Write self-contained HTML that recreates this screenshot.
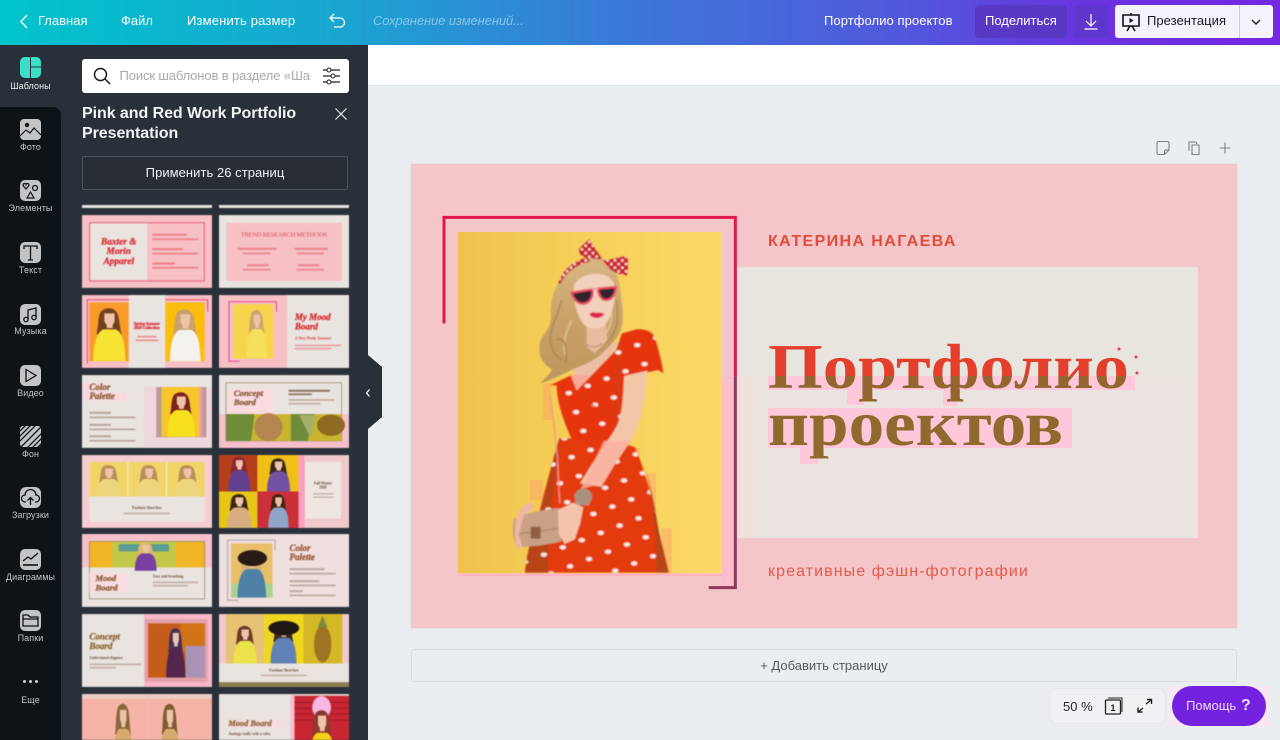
<!DOCTYPE html>
<html lang="ru"><head><meta charset="utf-8"><title>Портфолио проектов</title>
<style>
*{box-sizing:border-box}
html,body{margin:0;padding:0;width:1280px;height:740px;overflow:hidden;background:#ebeef1;font-family:"Liberation Sans","Noto Sans CJK SC",sans-serif}
.a{position:absolute;white-space:nowrap}
#top{left:0;top:0;width:1280px;height:45px;background:linear-gradient(90deg,#00c4cc 0%,#18a7d0 25%,#3d76d8 50%,#5355dc 72%,#6a33e0 85%,#7328e2 100%)}
.t{color:#fff;font-size:13px;line-height:18px;top:12px;font-weight:400}
#side{left:0;top:45px;width:368px;height:695px;background:#293039}
#nav{left:0;top:107px;width:61px;height:633px;background:#0e1318;border-top-right-radius:8px}
.ic{position:absolute;left:20px;width:21px;height:21px}
.lb{position:absolute;left:0;width:61px;text-align:center;font-size:9px;line-height:12px;color:#bfc3c6;letter-spacing:.1px}
#grid{left:82px;top:205px;width:267px;height:535px;overflow:hidden}
#grid svg{position:absolute;width:130px;height:73px;display:block}
.h{font-family:"Liberation Serif","Noto Serif CJK SC",serif;font-weight:700;font-style:italic;stroke-width:1}
</style></head><body>
<svg width="0" height="0" style="position:absolute">
<defs>
<symbol id="p" viewBox="0 0 100 160" preserveAspectRatio="none">
<path fill="currentColor" d="M30 16C44 2 62 6 70 20c8 18 6 44 12 62H18c6-22 2-50 12-66z"/>
<path fill="#eec3a8" d="M38 22h26v24l-5 10v8H44v-9l-6-9z"/>
<path d="M10 160c0-40 6-84 26-92h30c22 8 24 52 26 92z"/>
</symbol>
</defs>
</svg>

<div id="top" class="a"></div>
<svg class="a" style="left:18px;top:13px" width="12" height="17" viewBox="0 0 12 17"><path d="M9 2L3 8.500 9 15" fill="none" stroke="#fff" stroke-width="1.400"/></svg>
<div class="a t" style="left:38px">Главная</div>
<div class="a t" style="left:121px">Файл</div>
<div class="a t" style="left:187px;letter-spacing:.16px">Изменить размер</div>
<svg class="a" style="left:327px;top:12px" width="20" height="18" viewBox="0 0 20 18"><path d="M7 2L3 6l4 4M3 6h10a4 4 0 0 1 0 9H7" fill="none" stroke="#fff" stroke-width="1.300"/></svg>
<div class="a t" style="left:373px;font-style:italic;color:#88c4ea;letter-spacing:-.1px">Сохранение изменений...</div>
<div class="a t" style="left:824px;letter-spacing:.07px">Портфолио проектов</div>
<div class="a" style="left:975px;top:5px;width:92px;height:33px;background:#5739c6;border-radius:4px"></div>
<div class="a t" style="left:985px">Поделиться</div>
<div class="a" style="left:1074px;top:5px;width:34px;height:33px;background:#5f37cf;border-radius:4px"></div>
<svg class="a" style="left:1082px;top:13px" width="18" height="18" viewBox="0 0 18 18"><path d="M9 1v12M4 8l5 5 5-5M2.500 16h13" fill="none" stroke="#fff" stroke-width="1.200"/></svg>
<div class="a" style="left:1115px;top:5px;width:158px;height:33px;background:#f6f2fb;border-radius:3px"></div>
<div class="a" style="left:1239px;top:5px;width:1px;height:33px;background:#cfcbd8"></div>
<svg class="a" style="left:1120px;top:12px" width="22" height="20" viewBox="0 0 22 20"><path d="M3 3h16v11H3zM11 1v2M7 19l3-5M15 19l-3-5" fill="none" stroke="#111" stroke-width="1.600"/><path d="M9.500 6l4 2.500-4 2.500z" fill="#111"/></svg>
<div class="a t" style="left:1147px;color:#1b1b20;letter-spacing:.05px">Презентация</div>
<svg class="a" style="left:1250px;top:17px" width="12" height="10" viewBox="0 0 12 10"><path d="M2 3l4 4 4-4" fill="none" stroke="#222" stroke-width="1.500"/></svg>

<div id="side" class="a"></div>
<div id="nav" class="a"></div>
<svg class="ic" style="top:57px" viewBox="0 0 21 21"><rect width="21" height="21" rx="5" fill="#3bdfc9"/><path d="M10.500 0v21M10.500 10h10.500" stroke="#293039" stroke-width="1"/></svg>
<div class="lb" style="top:80px;color:#eef0f1">Шаблоны</div>
<svg class="ic" style="top:119px" viewBox="0 0 21 21"><rect width="21" height="21" rx="4" fill="#c2c4c6"/><circle cx="7" cy="6" r="2.200" fill="#0e1318"/><path d="M0 17l6-6 4 3 4-5 7 7" fill="none" stroke="#0e1318" stroke-width="1.200"/></svg>
<div class="lb" style="top:141px">Фото</div>
<svg class="ic" style="top:180px" viewBox="0 0 21 21"><rect width="21" height="21" rx="5" fill="#c2c4c6"/><path d="M6 9L3 5.500C3 3 5.500 3 6 4.500 6.500 3 9 3 9 5.500zM10.500 12l3.500 6H7z" fill="none" stroke="#0e1318" stroke-width="1.200"/><circle cx="15" cy="8" r="2.500" fill="none" stroke="#0e1318" stroke-width="1.200"/></svg>
<div class="lb" style="top:202px">Элементы</div>
<svg class="ic" style="top:242px" viewBox="0 0 21 21"><rect width="21" height="21" rx="5" fill="#c2c4c6"/><path d="M4 7V4h13v3M10.500 4v14M8 18h5" fill="none" stroke="#0e1318" stroke-width="1.300"/></svg>
<div class="lb" style="top:264px">Текст</div>
<svg class="ic" style="top:304px" viewBox="0 0 21 21"><rect width="21" height="21" rx="5" fill="#c2c4c6"/><path d="M8 15V6l8-2v9" fill="none" stroke="#0e1318" stroke-width="1.300"/><circle cx="6" cy="15.500" r="2.200" fill="none" stroke="#0e1318" stroke-width="1.300"/><circle cx="14" cy="13.500" r="2.200" fill="none" stroke="#0e1318" stroke-width="1.300"/></svg>
<div class="lb" style="top:325px">Музыка</div>
<svg class="ic" style="top:365px" viewBox="0 0 21 21"><rect width="21" height="21" rx="5" fill="#c2c4c6"/><path d="M6 4.500l10 6-10 6z" fill="none" stroke="#0e1318" stroke-width="1.300"/></svg>
<div class="lb" style="top:387px">Видео</div>
<svg class="ic" style="top:426px" viewBox="0 0 21 21"><rect width="21" height="21" rx="3" fill="#c2c4c6"/><path d="M-2 7L7-2M-2 12L12-2M-2 17L17-2M1 21L21 1M6 23L23 6M11 23L23 11M16 23L23 16" stroke="#0e1318" stroke-width="1.300"/></svg>
<div class="lb" style="top:448px">Фон</div>
<svg class="ic" style="top:487px" viewBox="0 0 21 21"><rect width="21" height="21" rx="6" fill="#c2c4c6"/><path d="M6 15H5a3.500 3.500 0 0 1 0-7 5.500 5.500 0 0 1 11 0 3.500 3.500 0 0 1 0 7h-1M10.500 18v-7M7.500 13.500l3-3 3 3" fill="none" stroke="#0e1318" stroke-width="1.300"/></svg>
<div class="lb" style="top:509px">Загрузки</div>
<svg class="ic" style="top:549px" viewBox="0 0 21 21"><rect width="21" height="21" rx="5" fill="#c2c4c6"/><path d="M3 12l5-4 3 2 7-6" fill="none" stroke="#0e1318" stroke-width="1.300"/><path d="M3 16h15" stroke="#0e1318" stroke-width="1.600"/></svg>
<div class="lb" style="top:571px">Диаграммы</div>
<svg class="ic" style="top:610px" viewBox="0 0 21 21"><rect width="21" height="21" rx="5" fill="#c2c4c6"/><path d="M3 16V5h5l2 2h8v9zM3 9h15" fill="none" stroke="#0e1318" stroke-width="1.300"/></svg>
<div class="lb" style="top:632px">Папки</div>
<svg class="a" style="left:22px;top:679px" width="18" height="5"><circle cx="2.500" cy="2.500" r="1.500" fill="#c9cbcd"/><circle cx="8.500" cy="2.500" r="1.500" fill="#c9cbcd"/><circle cx="14.500" cy="2.500" r="1.500" fill="#c9cbcd"/></svg>
<div class="lb" style="top:694px">Еще</div>

<div class="a" style="left:82px;top:59px;width:267px;height:34px;background:#fff;border-radius:3px"></div>
<svg class="a" style="left:92px;top:66px" width="20" height="20" viewBox="0 0 20 20"><circle cx="8.500" cy="8.500" r="6" fill="none" stroke="#111" stroke-width="1.400"/><path d="M13 13l5 5" stroke="#111" stroke-width="1.400"/></svg>
<div class="a" style="left:119.500px;top:67px;width:191px;overflow:hidden;font-size:13px;line-height:18px;color:#a5a8ac;letter-spacing:-.12px">Поиск шаблонов в разделе «Шаблоны»</div>
<svg class="a" style="left:322px;top:67px" width="19" height="18" viewBox="0 0 19 18"><path d="M1 3h17M1 9h17M1 15h17" stroke="#222" stroke-width="1.200"/><circle cx="7" cy="3" r="2" fill="#fff" stroke="#222" stroke-width="1.100"/><circle cx="11" cy="9" r="2" fill="#fff" stroke="#222" stroke-width="1.100"/><circle cx="7" cy="15" r="2" fill="#fff" stroke="#222" stroke-width="1.100"/></svg>
<div class="a" style="left:82px;top:103.500px;color:#f2f3f4;font-size:16px;line-height:20px;font-weight:700;white-space:normal;width:230px;letter-spacing:-.06px">Pink and Red Work Portfolio Presentation</div>
<svg class="a" style="left:334px;top:107px" width="14" height="14" viewBox="0 0 14 14"><path d="M1.500 1.500l11 11M12.500 1.500l-11 11" stroke="#eee" stroke-width="1.200"/></svg>
<div class="a" style="left:82px;top:156px;width:266px;height:34px;border:1px solid #4b525b;border-radius:2px;background:#292e36;color:#f0f1f2;font-size:13px;line-height:32px;text-align:center;font-weight:400;letter-spacing:.05px">Применить 26 страниц</div>

<div id="grid" class="a" style="filter:blur(.45px)">
<div class="a" style="left:0;top:0;width:130px;height:3px;background:#e9e4df"></div>
<div class="a" style="left:137px;top:0;width:130px;height:3px;background:#e9e4df"></div>

<svg style="left:0;top:10px" viewBox="0 0 389 218"><rect width="389" height="218" fill="#f6c0c5"/><rect x="24" y="24" width="171" height="172" fill="#e9e4df"/><rect x="23" y="23" width="343" height="174" fill="none" stroke="#ea5f72" stroke-width="3"/><g class="h" font-size="28" fill="#d8303a" stroke="#d8303a" text-anchor="middle"><text x="110" y="88">Baxter &amp;</text><text x="110" y="117">Morin</text><text x="110" y="146">Apparel</text></g><g fill="#ec8086"><rect x="210" y="56" width="105" height="6"/><rect x="210" y="70" width="138" height="5"/><rect x="210" y="99" width="92" height="6"/><rect x="210" y="113" width="138" height="5"/><rect x="210" y="142" width="68" height="6"/><rect x="210" y="155" width="138" height="5"/></g></svg>

<svg style="left:137px;top:10px" viewBox="0 0 389 218"><rect width="389" height="218" fill="#e9e4df"/><rect x="22" y="23" width="345" height="174" fill="#f6c0c5"/><text x="194" y="64" text-anchor="middle" font-family="Liberation Serif,serif" font-size="20" fill="#d9545e" textLength="258">TREND RESEARCH METHODS</text><g fill="#e9858b"><rect x="56" y="98" width="116" height="6"/><rect x="72" y="112" width="82" height="5"/><rect x="226" y="98" width="100" height="6"/><rect x="232" y="112" width="82" height="5"/><rect x="84" y="147" width="64" height="6"/><rect x="72" y="161" width="82" height="5"/><rect x="236" y="147" width="64" height="6"/><rect x="232" y="161" width="82" height="5"/></g></svg>

<svg style="left:0;top:90px" viewBox="0 0 389 218"><rect width="389" height="218" fill="#f6c0c5"/><path d="M16 205V14h360v36" fill="none" stroke="#e8486e" stroke-width="3"/><rect x="22" y="22" width="118" height="176" fill="#fa9a28"/><rect x="249" y="22" width="118" height="176" fill="#fbbe0c"/><use href="#p" x="22" y="32" width="118" height="166" fill="#f7e334" color="#73401f"/><use href="#p" x="252" y="35" width="112" height="163" fill="#f4f2ee" color="#c9a16b"/><rect x="140" width="109" height="218" fill="#e9e4df"/><g class="h" font-size="12" fill="#dd3640" stroke="#dd3640" stroke-width=".4" text-anchor="middle"><text x="194" y="90">Spring Summer</text><text x="194" y="102">2020 Collection</text></g><g fill="#ec8c90"><rect x="165" y="122" width="58" height="5"/><rect x="160" y="133" width="68" height="5"/></g></svg>

<svg style="left:137px;top:90px" viewBox="0 0 389 218"><rect width="389" height="218" fill="#f6c0c5"/><rect x="204" width="185" height="218" fill="#e9e4df"/><path d="M172 50V20H30v178h32" fill="none" stroke="#dd4a90" stroke-width="3"/><rect x="42" y="27" width="121" height="163" fill="#f8d44e"/><use href="#p" x="75" y="38" width="75" height="150" fill="#f4e05a" color="#caa76c"/><g class="h" font-size="27" fill="#d52f36" stroke="#d52f36"><text x="227" y="74">My Mood</text><text x="227" y="103">Board</text></g><text x="227" y="133" class="h" font-size="12" fill="#d83840">A Very Pretty Summer</text><g fill="#e8a0a0"><rect x="227" y="148" width="138" height="5"/><rect x="227" y="158" width="110" height="5"/></g></svg>

<svg style="left:0;top:170px" viewBox="0 0 389 218"><rect width="389" height="218" fill="#e9e4df"/><rect x="0" y="52" width="135" height="24" fill="#f8d8df"/><rect x="0" y="25" width="70" height="25" fill="#f8d8df"/><rect x="185" y="35" width="204" height="183" fill="#efd8dc"/><rect x="222" y="36" width="150" height="150" fill="#bc9a98"/><rect x="238" y="36" width="118" height="148" fill="#f6c62b"/><rect x="352" y="36" width="8" height="148" fill="#f29ab0"/><use href="#p" x="245" y="45" width="102" height="140" fill="#f7e01c" color="#7b2418"/><g class="h" font-size="27" fill="#8d5e3a" stroke="#8d5e3a"><text x="22" y="44">Color</text><text x="22" y="72">Palette</text></g><g fill="#b9a59a"><rect x="22" y="110" width="65" height="6"/><rect x="22" y="124" width="138" height="5"/><rect x="22" y="146" width="65" height="6"/><rect x="22" y="160" width="138" height="5"/><rect x="22" y="180" width="65" height="6"/><rect x="22" y="194" width="138" height="5"/></g></svg>

<svg style="left:137px;top:170px" viewBox="0 0 389 218"><rect width="389" height="218" fill="#e9e4df"/><rect y="117" width="389" height="101" fill="#f6c0cb"/><rect x="25" y="40" width="135" height="78" fill="#f9dbe0"/><rect x="21" y="23" width="346" height="174" fill="none" stroke="#8f7c5a" stroke-width="2"/><rect x="21" y="117" width="346" height="80" fill="#c8b52e"/><path d="M21 117h85l-10 80H21zM215 117h70l-20 80h-50z" fill="#6f8c39"/><circle cx="148" cy="156" r="42" fill="#b4854f"/><ellipse cx="335" cy="150" rx="42" ry="32" fill="#8e6a22"/><path d="M240 120l35 70 15-70z" fill="#a7b06a"/><g class="h" font-size="26" fill="#8d5e3a" stroke="#8d5e3a"><text x="44" y="62">Concept</text><text x="44" y="90">Board</text></g><g fill="#8c7466"><rect x="208" y="44" width="124" height="6"/><rect x="208" y="55" width="70" height="5"/></g><g fill="#c4ada2"><rect x="208" y="72" width="138" height="5"/><rect x="208" y="83" width="95" height="5"/></g></svg>

<svg style="left:0;top:250px" viewBox="0 0 389 218"><rect width="389" height="218" fill="#f6cdd1"/><rect x="22" y="21" width="345" height="103" fill="#f0d668"/><use href="#p" x="35" y="25" width="90" height="110" fill="#ecd57c" color="#b88f56"/><use href="#p" x="155" y="25" width="90" height="110" fill="#ecd57c" color="#b88f56"/><use href="#p" x="270" y="25" width="90" height="110" fill="#ecd57c" color="#b88f56"/><rect x="136" y="21" width="2" height="103" fill="#fff"/><rect x="252" y="21" width="2" height="103" fill="#fff"/><rect x="22" y="124" width="345" height="75" fill="#e9e4df"/><text x="194" y="162" text-anchor="middle" font-family="Liberation Serif,serif" font-weight="700" font-size="12" fill="#6c4b36">Fashion Sketches</text><rect x="125" y="172" width="138" height="5" fill="#c4b0a5"/></svg>

<svg style="left:137px;top:250px" viewBox="0 0 389 218"><rect width="389" height="218" fill="#efc9cc"/><rect x="238" width="18" height="218" fill="#fb9fc0"/><rect x="258" y="20" width="107" height="170" fill="#efe5e1"/><rect width="115" height="109" fill="#b53f1c"/><rect x="115" width="123" height="109" fill="#f1c016"/><rect y="109" width="115" height="109" fill="#e6c716"/><rect x="115" y="109" width="123" height="109" fill="#cb2f38"/><use href="#p" x="20" y="0" width="80" height="109" fill="#63408f" color="#8b2332"/><use href="#p" x="135" y="5" width="85" height="104" fill="#7452a3" color="#3a2518"/><use href="#p" x="15" y="112" width="90" height="106" fill="#d8ad82" color="#3d2314"/><use href="#p" x="140" y="112" width="75" height="106" fill="#90a5c8" color="#3d2314"/><g font-family="Liberation Serif,serif" font-weight="700" font-size="11" fill="#5d4030" text-anchor="middle"><text x="311" y="88">Fall Winter</text><text x="311" y="100">2020</text></g><rect x="282" y="114" width="60" height="4" fill="#c4b0a5"/><rect x="282" y="124" width="60" height="4" fill="#c4b0a5"/></svg>

<svg style="left:0;top:329px" viewBox="0 0 389 218"><rect width="389" height="218" fill="#e9e4df"/><rect width="389" height="20" fill="#f6c0cb"/><rect y="20" width="22" height="80" fill="#f6c0cb"/><rect x="367" y="20" width="22" height="80" fill="#f6c0cb"/><rect x="22" y="22" width="345" height="78" fill="#f0b628"/><rect x="90" y="22" width="190" height="78" fill="#c2c84a"/><rect x="110" y="30" width="150" height="22" fill="#5d9e92"/><use href="#p" x="150" y="20" width="80" height="90" fill="#7740a0" color="#e0b76c"/><rect x="22" y="22" width="345" height="172" fill="none" stroke="#8f7c5a" stroke-width="2"/><rect x="22" y="115" width="115" height="60" fill="#f8dce0"/><g class="h" font-size="26" fill="#8d5e3a" stroke="#8d5e3a"><text x="40" y="140">Mood</text><text x="40" y="169">Board</text></g><text x="212" y="130" font-family="Liberation Serif,serif" font-weight="700" font-size="11" fill="#6c4b36">Easy and breathing</text><g fill="#c4b0a5"><rect x="212" y="142" width="136" height="5"/><rect x="212" y="152" width="105" height="5"/></g></svg>

<svg style="left:137px;top:329px" viewBox="0 0 389 218"><rect width="389" height="218" fill="#efdfde"/><path d="M168 48V18H26v180h32" fill="none" stroke="#8e8a8f" stroke-width="2"/><rect x="36" y="28" width="124" height="162" fill="#e9c06a"/><rect x="36" y="148" width="124" height="42" fill="#a9d38e"/><use href="#p" x="45" y="42" width="105" height="148" fill="#4e80a8" color="#d9b26a"/><ellipse cx="100" cy="72" rx="44" ry="24" fill="#281b15"/><g class="h" font-size="27" fill="#9a5a3c" stroke="#9a5a3c"><text x="211" y="50">Color</text><text x="211" y="78">Palette</text></g><g fill="#bca99f"><rect x="211" y="102" width="105" height="6"/><rect x="211" y="116" width="138" height="5"/><rect x="211" y="138" width="90" height="6"/><rect x="211" y="151" width="138" height="5"/><rect x="211" y="168" width="40" height="6"/><rect x="211" y="181" width="138" height="5"/></g></svg>

<svg style="left:0;top:409px" viewBox="0 0 389 218"><rect width="389" height="218" fill="#e9e4df"/><rect x="186" width="203" height="218" fill="#f9b7c9"/><rect x="188" y="15" width="188" height="188" fill="#e3a0a8"/><rect x="198" y="28" width="170" height="162" fill="#c65c1b"/><rect x="295" y="28" width="73" height="85" fill="#d27318"/><rect x="310" y="95" width="58" height="95" fill="#a992b4"/><use href="#p" x="245" y="35" width="70" height="155" fill="#54254e" color="#463058"/><g class="h" font-size="27" fill="#8f6a3a" stroke="#8f6a3a"><text x="22" y="76">Concept</text><text x="22" y="104">Board</text></g><text x="22" y="135" font-family="Liberation Serif,serif" font-weight="700" font-size="11" fill="#6c4b36">Understated elegance</text><g fill="#c4b0a5"><rect x="22" y="148" width="155" height="5"/><rect x="22" y="158" width="80" height="5"/></g></svg>

<svg style="left:137px;top:409px" viewBox="0 0 389 218"><rect width="389" height="218" fill="#f3c9ce"/><rect x="20" width="115" height="148" fill="#e6c375"/><rect x="135" width="118" height="148" fill="#efd71e"/><rect x="253" width="116" height="148" fill="#d4b825"/><use href="#p" x="35" y="30" width="85" height="118" fill="#ece24a" color="#6e3a24"/><use href="#p" x="145" y="15" width="95" height="133" fill="#6281b5" color="#3e2c22"/><ellipse cx="194" cy="42" rx="46" ry="22" fill="#1f1713"/><ellipse cx="310" cy="90" rx="26" ry="55" fill="#a07322"/><path d="M295 40l15-35 15 35z" fill="#7d8a40"/><rect y="148" width="389" height="56" fill="#e9e4df"/><rect y="204" width="389" height="14" fill="#8d7c4e"/><text x="194" y="172" text-anchor="middle" font-family="Liberation Serif,serif" font-weight="700" font-size="12" fill="#6c4b36">Fashion Sketches</text><rect x="125" y="181" width="138" height="5" fill="#c4b0a5"/></svg>

<svg style="left:0;top:489px" viewBox="0 0 389 218"><rect width="389" height="218" fill="#f6b3a8"/><rect width="389" height="14" fill="#eccdc4"/><rect x="196" width="3" height="218" fill="#edc0b5"/><use href="#p" x="85" y="20" width="75" height="198" fill="#d9aa6e" color="#8b6838"/><use href="#p" x="225" y="20" width="75" height="198" fill="#d9aa6e" color="#7d5c30"/></svg>

<svg style="left:137px;top:489px" viewBox="0 0 389 218"><rect width="389" height="218" fill="#e9e4df"/><rect x="214" width="12" height="218" fill="#f8bcd0"/><rect x="226" y="5" width="163" height="213" fill="#c92634"/><path d="M226 25h163M226 42h163M226 60h163M226 78h163" stroke="#a51c2b" stroke-width="4"/><ellipse cx="307" cy="40" rx="28" ry="34" fill="#f8b8e2"/><use href="#p" x="260" y="40" width="95" height="178" fill="#f8d017" color="#8c3a30"/><rect x="20" y="78" width="180" height="24" fill="#f6dce0"/><text x="28" y="96" class="h" font-size="25" fill="#8f6a3a" stroke="#8f6a3a">Mood Board</text><text x="28" y="123" font-family="Liberation Serif,serif" font-weight="700" font-size="11" fill="#6c4b36">Analogy really with a color</text></svg>
</div>

<svg class="a" style="left:368px;top:355px" width="15" height="74" viewBox="0 0 15 74"><path d="M0 0l14 12v50L0 74z" fill="#293039"/></svg>
<svg class="a" style="left:364px;top:388px" width="8" height="10" viewBox="0 0 8 10"><path d="M5.500 1.500L2.500 5l3 3.500" fill="none" stroke="#fff" stroke-width="1.300"/></svg>

<div class="a" style="left:368px;top:45px;width:912px;height:41px;background:#fff;border-bottom:1px solid #dfe2e5"></div>
<svg class="a" style="left:1155px;top:140px" width="80" height="16" viewBox="0 0 80 16"><g fill="none" stroke="#7d8287" stroke-width="1.100"><path d="M2 3a1.500 1.500 0 0 1 1.500-1.500h9A1.500 1.500 0 0 1 14 3v7l-4.500 4.500h-6A1.500 1.500 0 0 1 2 13zM14 10h-3a1.500 1.500 0 0 0-1.500 1.500v3"/><path d="M34 11V2h7l1 2M37 5h7v9.500h-7z"/><path d="M70 2.500v11M64.500 8h11"/></g></svg>

<div class="a" style="left:411px;top:164px;width:826px;height:464px;background:#f5c6c9;box-shadow:0 0 2px rgba(0,0,0,.12)"></div>
<div class="a" style="left:737px;top:267px;width:461px;height:110px;background:#e8e4de"></div>
<div class="a" style="left:737px;top:377px;width:461px;height:161px;background:#ebe3df"></div>
<div class="a" style="left:737px;top:377px;width:16px;height:161px;background:#efdfdd"></div>
<div class="a" style="left:722px;top:377px;width:15px;height:211px;background:#fbbccb"></div>
<div class="a" style="left:458px;top:574px;width:264px;height:2px;background:#fbb3c4"></div>

<svg class="a" style="left:430px;top:200px" width="320" height="400" viewBox="0 0 960 1200">
<defs>
<linearGradient id="bgY" x1="0" x2="1" y1="0" y2="0"><stop offset="0" stop-color="#efc34e"/><stop offset=".35" stop-color="#f5cd55"/><stop offset="1" stop-color="#fbd968"/></linearGradient>
<pattern id="dots" width="86" height="86" patternUnits="userSpaceOnUse" patternTransform="rotate(24)"><ellipse cx="14" cy="16" rx="9.500" ry="6.500" fill="#fdebe6" transform="rotate(-24 14 16)"/><ellipse cx="57" cy="59" rx="9.500" ry="6.500" fill="#fdebe6" transform="rotate(-24 57 59)"/></pattern>
<pattern id="dots2" width="22" height="22" patternUnits="userSpaceOnUse"><circle cx="5" cy="5" r="4" fill="#fbe6e0"/><circle cx="16" cy="16" r="4" fill="#fbe6e0"/></pattern>
<linearGradient id="hair" x1="0" x2="0" y1="0" y2="1"><stop offset="0" stop-color="#d9b683"/><stop offset=".5" stop-color="#c9a168"/><stop offset="1" stop-color="#bd955e"/></linearGradient>
<filter id="sb"><feGaussianBlur stdDeviation="2"/></filter>
</defs>
<path d="M42 370V52H916V530" fill="none" stroke="#e21650" stroke-width="9" stroke-linejoin="miter"/>
<path d="M916 530V1163H836" fill="none" stroke="#8f3a5c" stroke-width="9" stroke-linejoin="miter"/>
<rect x="84" y="96" width="792" height="1024" fill="url(#bgY)"/>
<g fill="#fca56c" opacity=".5"><rect x="340" y="550" width="24" height="110"/><rect x="300" y="840" width="40" height="60"/><rect x="650" y="820" width="28" height="150"/><rect x="695" y="985" width="30" height="135"/><rect x="590" y="745" width="40" height="40"/></g>
<g filter="url(#sb)">
<!-- skirt -->
<path d="M388 715h134l92 26c28 60 52 150 70 240 10 50 24 100 32 137H285c4-55 20-110 40-170 18-70 42-165 63-233z" fill="#e33a10"/>
<path d="M388 715c-20 80-44 180-63 233-20 60-36 115-40 170h70c-4-90 10-230 36-403zM640 790c24 70 36 170 40 328h36c-10-50-24-90-34-150-8-60-22-120-42-178z" fill="#a8481a" opacity=".75"/>
<path d="M388 715h134l92 26c28 60 52 150 70 240 10 50 24 100 32 137H285c4-55 20-110 40-170 18-70 42-165 63-233z" fill="url(#dots)"/>
<!-- neck & chest -->
<path d="M462 360h66l6 80 40-20-90 130-54-30z" fill="#ecbfa4"/>
<path d="M420 525h62l-42 48z" fill="#f7a898"/>
<!-- hair -->
<path d="M440 186c40-24 90-20 110 16 20 34 22 76 26 110 4 32 4 60-6 84-14 30-40 50-58 68-22 20-48 30-78 42-24 10-46 24-106 46 18-18 32-30 38-44-20-12-38-30-38-62 0-30 16-44 28-64 12-22 2-52 10-84 6-30 32-86 74-112z" fill="url(#hair)"/>
<g fill="none" stroke-width="5" opacity=".75"><path d="M395 300c-12 50-30 70-34 110-2 30 14 60 34 70" stroke="#a88050"/><path d="M425 360c-18 40-30 70-18 110" stroke="#e6cb9f"/><path d="M560 300c6 50 6 90-30 130" stroke="#a88050"/><path d="M380 420c24-10 34 20 26 70" stroke="#a88050"/><path d="M545 340c0 40-20 70-40 90" stroke="#e6cb9f"/></g>
<!-- neck over hair -->
<path d="M470 372h58l4 48-38 40-24-20z" fill="#e9bb9f"/>
<path d="M468 432c16 14 30 12 48-2" fill="none" stroke="#b89a7c" stroke-width="4"/>
<!-- face -->
<path d="M432 256C450 216 530 206 552 250c6 50-4 98-27 125-20 17-47 13-65-3-20-27-32-72-28-116z" fill="#f2d0bb"/>
<!-- headband & bow -->
<path d="M385 250c10-38 46-68 88-78l8 12c-42 10-74 34-90 68z" fill="#c9252c"/>
<path d="M385 250c10-38 46-68 88-78l8 12c-42 10-74 34-90 68z" fill="url(#dots2)"/>
<path d="M478 118l40 62-50-8c-14-2-22-12-21-24 8-10 20-22 31-30zM518 182c22-2 50-12 74-14 3 18 2 40-1 58-20-2-38-8-50-18z" fill="#c9222a"/>
<path d="M478 118l40 62-50-8c-14-2-22-12-21-24 8-10 20-22 31-30zM518 182c22-2 50-12 74-14 3 18 2 40-1 58-20-2-38-8-50-18z" fill="url(#dots2)"/>
<!-- glasses -->
<path d="M425 278l62-10c2 16-2 40-26 43-18 2-32-16-36-33zM504 266l53-5c0 16-6 38-30 39-14 0-22-18-23-34z" fill="#33222c" stroke="#ea4a60" stroke-width="7"/>
<path d="M487 268l17-2" stroke="#f3a0a8" stroke-width="7"/>
<path d="M478 342c8-7 14-6 20-3 7-3 16-1 26 3-8 13-36 19-46 0z" fill="#e0214f"/>
<!-- bodice + sleeve -->
<path d="M360 556l62-30 18 46 118-122 18-50 42-12c28-2 46 6 56 22 10 34 22 76 26 110l-16-10-64 14-10 120-50 80-134-4c-22-50-46-110-46-164z" fill="#e6360f"/>
<path d="M560 450l18-50-6 130-8 100-20 60z" fill="#c8401a" opacity=".5"/>
<path d="M360 556l62-30 18 46 118-122 18-50 42-12c28-2 46 6 56 22 10 34 22 76 26 110l-16-10-64 14-10 120-50 80-134-4c-22-50-46-110-46-164z" fill="url(#dots)"/>
<path d="M440 572l92 80" stroke="#c23c14" stroke-width="3" fill="none"/>
<!-- strap -->
<path d="M362 590l20 180 7 140" fill="none" stroke="#f0958a" stroke-width="4"/>
<!-- arm -->
<path d="M582 528l70-16c-2 44-8 84-14 110-8 36-18 70-34 96-18 30-40 58-60 90l-30 52-64-10 44-70 56-84c20-30 28-60 32-168z" fill="#f3c6a8"/>
<path d="M522 722l80 0-50 76-30 50-70 20 30-60z" fill="#fab0a0" opacity=".8"/>
<!-- bag -->
<path d="M250 960c20-20 100-32 138-36l6 100c-40 10-100 18-134 16-12-20-14-50-10-80z" fill="#c9a185"/>
<path d="M254 1003l134-18" stroke="#a88064" stroke-width="3"/>
<rect x="302" y="980" width="30" height="36" fill="#8e6240"/>
<!-- hands -->
<path d="M262 945c8-20 22-34 44-40l6 22-30 18-16 60 12 40-18 0c-8-30-6-70 2-100z" fill="#f0b7a0"/>
<path d="M384 930l46-22 30 14-10 50-16 46-30 14-18-30z" fill="#f4c4aa"/>
<path d="M432 882l52 12-8 22-38-2z" fill="#b0988a"/>
<ellipse cx="460" cy="890" rx="26" ry="24" fill="#a8927e"/>
</g>
</svg>

<div class="a" style="left:768px;top:232px;font-size:16px;line-height:20px;font-weight:700;color:#e14c3a;letter-spacing:1.400px">КАТЕРИНА НАГАЕВА</div>

<svg class="a" style="left:740px;top:320px" width="440" height="160" viewBox="740 320 440 160">
<defs><linearGradient id="tw" gradientUnits="userSpaceOnUse" x1="0" y1="320" x2="0" y2="450"><stop offset="0" stop-color="#e43f2d"/><stop offset=".431" stop-color="#e43f2d"/><stop offset=".431" stop-color="#956530"/><stop offset="1" stop-color="#956530"/></linearGradient></defs>
<g fill="#fdc8da"><rect x="768" y="376" width="367" height="14"/><rect x="847" y="388" width="17" height="17"/><rect x="943" y="388" width="14" height="18"/><rect x="768" y="408" width="304" height="40"/><rect x="800" y="446" width="18" height="18"/></g>
<text x="768" y="388" font-family="Liberation Serif,serif" font-weight="700" font-size="63" fill="url(#tw)" textLength="361" lengthAdjust="spacingAndGlyphs">Портфолио</text>
<text x="768" y="445" font-family="Liberation Serif,serif" font-weight="700" font-size="63" fill="#8f6a2f" textLength="295" lengthAdjust="spacingAndGlyphs">проектов</text>
<circle cx="1119" cy="349" r="1.500" fill="#ea3a52"/><circle cx="1136" cy="357" r="1.500" fill="#ea3a52"/><circle cx="1137" cy="373" r="1.500" fill="#ea3a52"/>
</svg>

<div class="a" style="left:768px;top:561px;font-size:16px;line-height:22px;color:#e25a48;letter-spacing:1.090px">креативные фэшн-фотографии</div>

<div class="a" style="left:411px;top:649px;width:826px;height:33px;border:1px solid #dadde1;border-radius:3px;color:#54585d;font-size:13px;line-height:31px;text-align:center">+ Добавить страницу</div>

<div class="a" style="left:1049px;top:688px;width:117px;height:36px;background:#eff1f4;border:1px solid #e5e7ea;border-radius:8px"></div>
<div class="a" style="left:1063px;top:698px;font-size:13px;line-height:18px;color:#26292d">50 %</div>
<svg class="a" style="left:1104px;top:696px" width="20" height="20" viewBox="0 0 20 20"><rect x="1.500" y="4" width="15" height="14" rx="1" fill="#eff1f4" stroke="#222" stroke-width="1.300"/><path d="M4 2h14v14" fill="none" stroke="#222" stroke-width="1"/><text x="9" y="15" text-anchor="middle" font-size="9" font-weight="700" font-family="Liberation Sans,sans-serif" fill="#222">1</text></svg>
<svg class="a" style="left:1136px;top:698px" width="18" height="16" viewBox="0 0 18 16"><path d="M10 6l5-4M11 1.500h4.500V6M7 10l-5 4M2 9.500V14h4.500" fill="none" stroke="#222" stroke-width="1.400"/></svg>
<div class="a" style="left:1169px;top:686px;width:100px;height:40px;background:#fbe7f3"></div>
<div class="a" style="left:1172px;top:686px;width:94px;height:40px;background:#7322e0;border-radius:20px"></div>
<div class="a" style="left:1186px;top:697px;font-size:13px;line-height:18px;color:#ecdcff">Помощь</div>
<div class="a" style="left:1241px;top:696px;font-size:16px;line-height:20px;font-weight:700;color:#ecdcff">?</div>
</body></html>
